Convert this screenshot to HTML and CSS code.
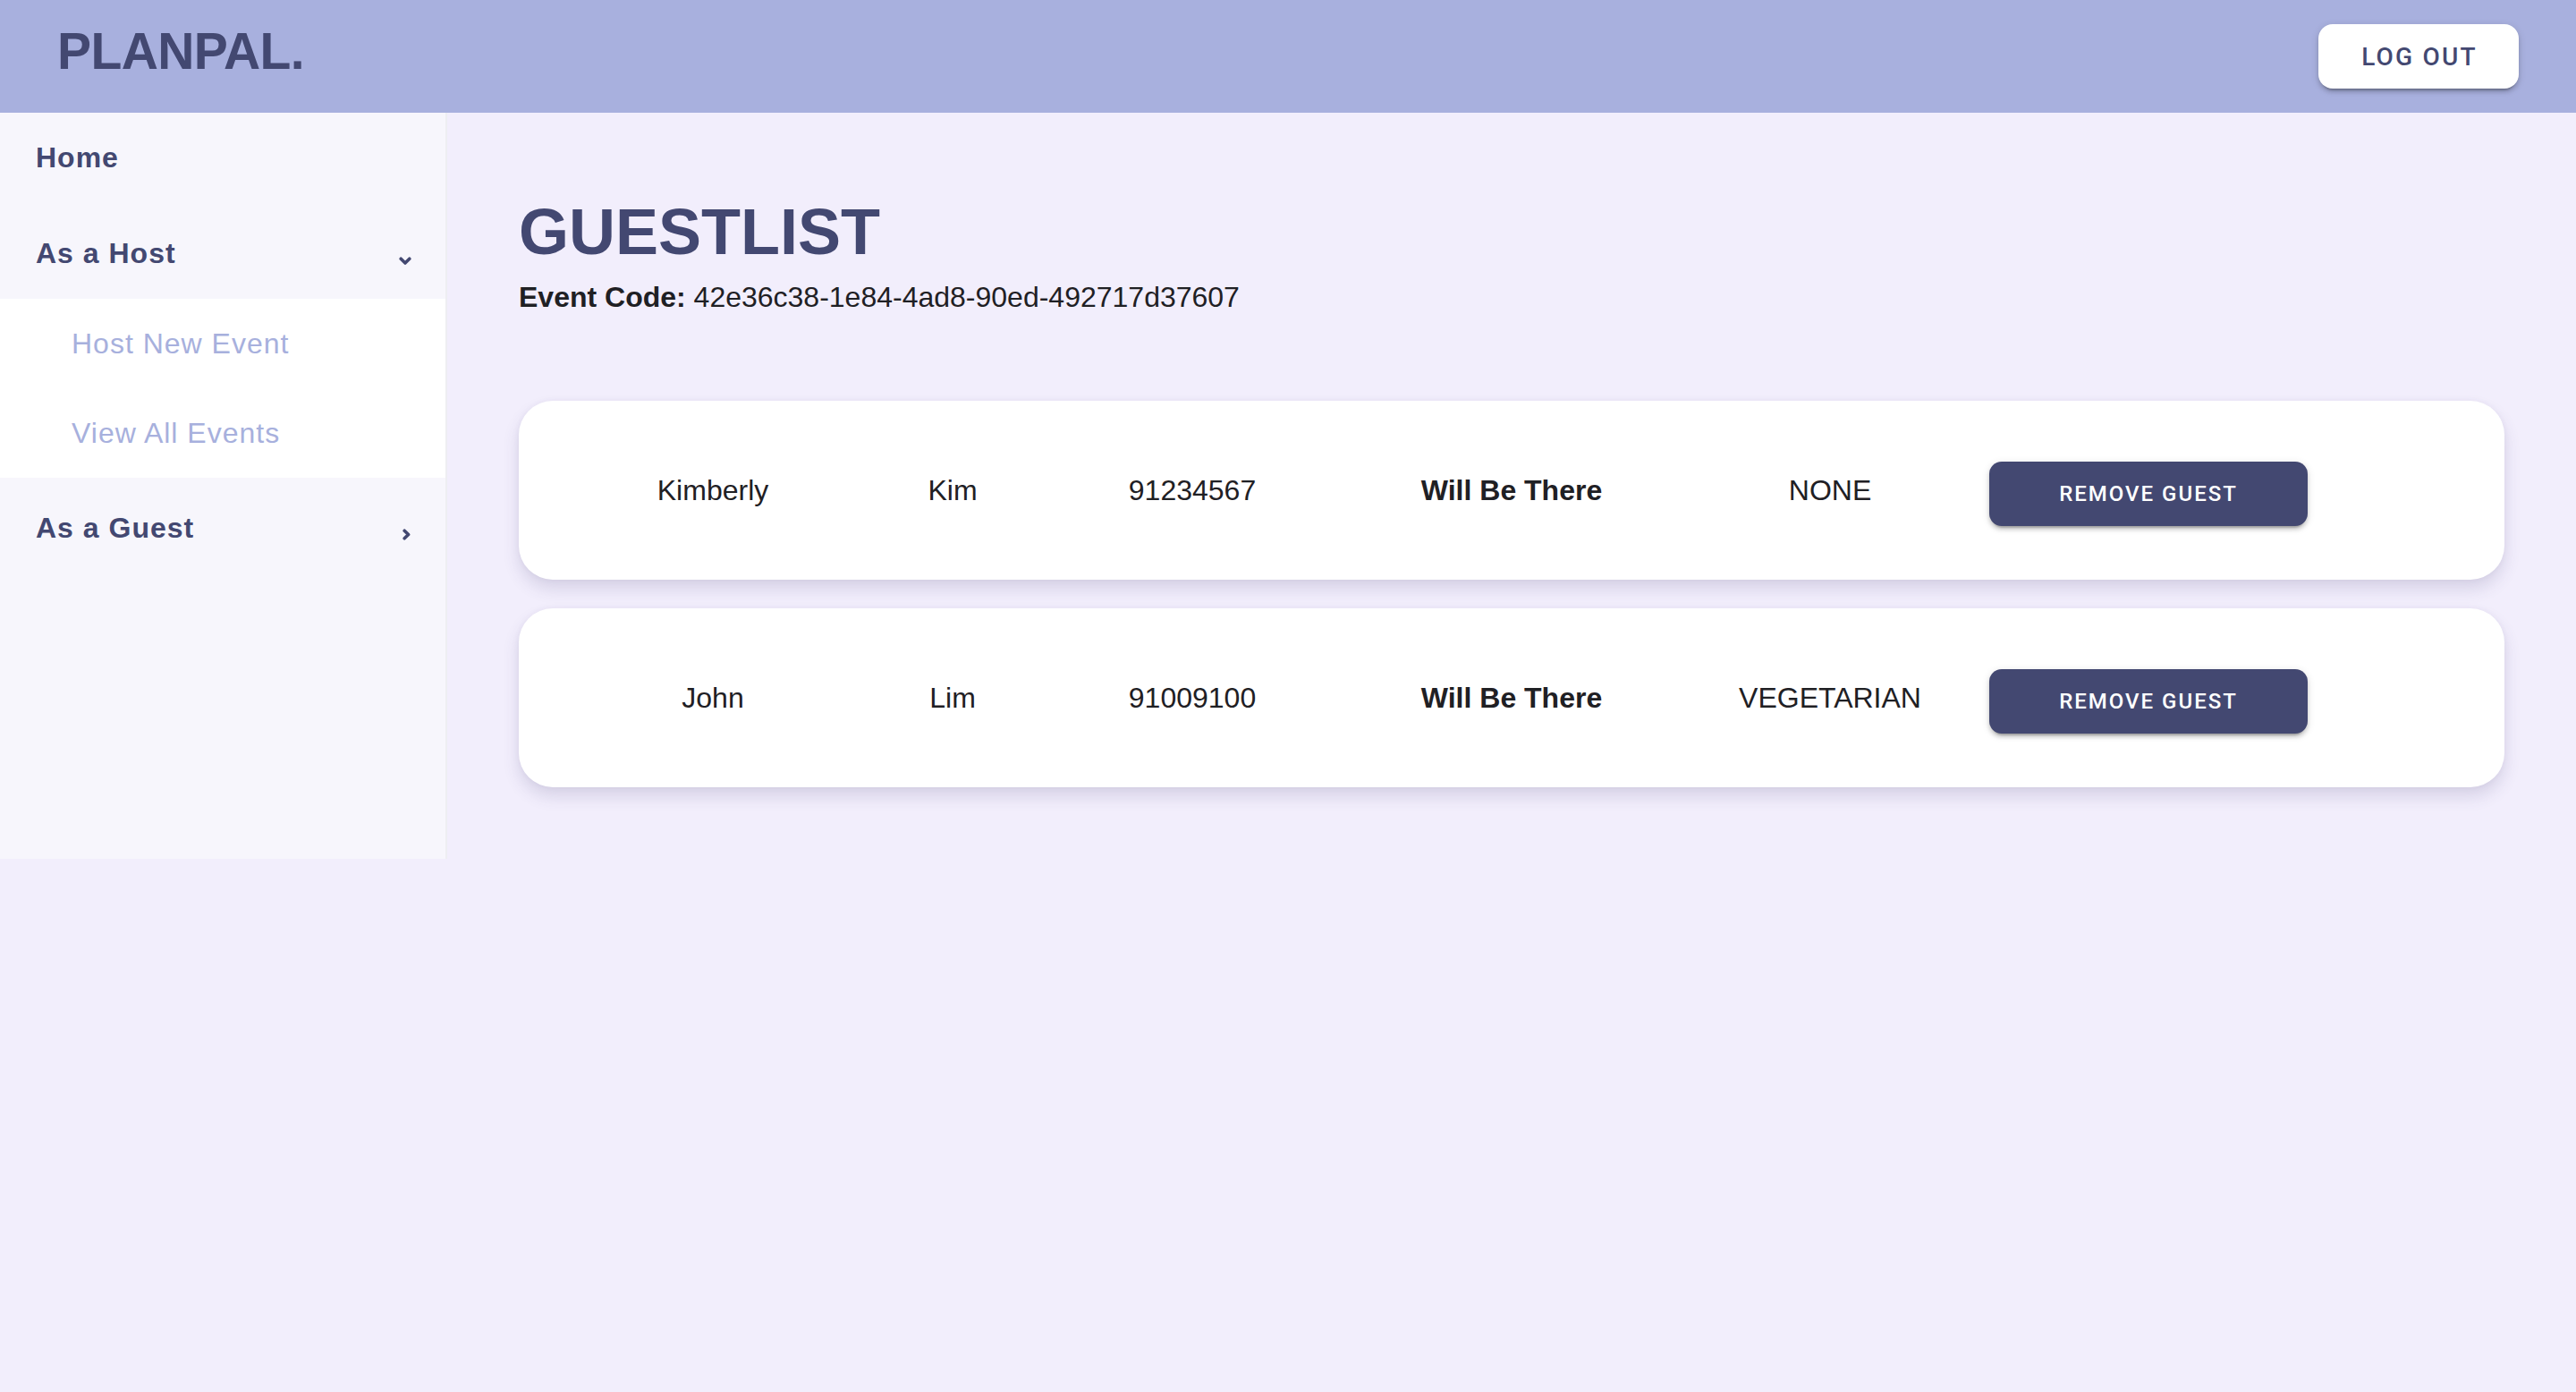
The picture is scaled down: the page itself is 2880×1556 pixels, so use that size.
FILE: index.html
```html
<!DOCTYPE html>
<html lang="en">
<head>
<meta charset="utf-8">
<title>PlanPal - Guestlist</title>
<link rel="stylesheet" href="styles.css">
</head>
<body>
<header class="topbar">
  <div class="logo">PLANPAL.</div>
  <button class="logout">LOG OUT</button>
</header>
<div class="layout">
  <aside class="sidebar">
    <div class="nav-row nav-home">Home</div>
    <div class="nav-row nav-host">
      <span>As a Host</span>
      <svg class="chev chev-down" width="14" height="10" viewBox="0 0 14 10"><polyline points="2.2,2.2 7,7 11.8,2.2" fill="none" stroke="#434871" stroke-width="3.6" stroke-linecap="round" stroke-linejoin="round"/></svg>
    </div>
    <div class="submenu">
      <div class="sub-row">Host New Event</div>
      <div class="sub-row">View All Events</div>
    </div>
    <div class="nav-row nav-guest">
      <span>As a Guest</span>
      <svg class="chev chev-right" width="9" height="13" viewBox="0 0 9 13"><polyline points="2.2,2.2 6.6,6.5 2.2,10.8" fill="none" stroke="#434871" stroke-width="3.6" stroke-linecap="round" stroke-linejoin="round"/></svg>
    </div>
  </aside>
  <main class="content">
    <h1 class="title">GUESTLIST</h1>
    <p class="code"><strong>Event Code:</strong> 42e36c38-1e84-4ad8-90ed-492717d37607</p>
    <div class="cards">
      <div class="card">
        <div class="cell">Kimberly</div>
        <div class="cell">Kim</div>
        <div class="cell">91234567</div>
        <div class="cell wide status">Will Be There</div>
        <div class="cell wide">NONE</div>
        <div class="cell wide"><button class="remove">REMOVE GUEST</button></div>
      </div>
      <div class="card">
        <div class="cell">John</div>
        <div class="cell">Lim</div>
        <div class="cell">91009100</div>
        <div class="cell wide status">Will Be There</div>
        <div class="cell wide">VEGETARIAN</div>
        <div class="cell wide"><button class="remove">REMOVE GUEST</button></div>
      </div>
    </div>
  </main>
</div>
</body>
</html>
```
FILE: styles.css
```css
* { box-sizing: border-box; }
html, body { margin: 0; padding: 0; }
body {
  background: #f2eefc;
  font-family: "Liberation Sans", Arial, Helvetica, sans-serif;
  color: #1f2024;
  min-height: 1556px;
}
.topbar {
  height: 126px;
  background: #a8b0de;
  display: flex;
  align-items: center;
  justify-content: space-between;
  padding: 0 64px 0 64px;
}
.logo {
  font-size: 57px;
  line-height: 57px;
  font-weight: 700;
  letter-spacing: -0.6px;
  color: #434871;
  margin-bottom: 12px;
}
.logout {
  width: 224px;
  height: 72px;
  border: none;
  border-radius: 16px;
  background: #ffffff;
  color: #434871;
  font-family: Roboto, "Liberation Sans", sans-serif;
  font-weight: 500;
  font-size: 28px;
  letter-spacing: 2.2px;
  padding: 0 0 0 2px;
  box-shadow: 0 6px 2px -4px rgba(0,0,0,0.2), 0 4px 4px 0 rgba(0,0,0,0.14), 0 2px 10px 0 rgba(0,0,0,0.12);
}
.layout {
  display: flex;
  align-items: flex-start;
}
.sidebar {
  width: 500px;
  height: 834px;
  flex-shrink: 0;
  background: #f7f6fc;
  border-right: 2px solid #eeeef2;
}
.nav-row {
  display: flex;
  align-items: center;
  justify-content: space-between;
  padding: 0 38px 0 40px;
  font-size: 32px;
  font-weight: 700;
  letter-spacing: 1px;
  color: #434871;
}
.nav-home { height: 99px; padding-top: 2px; }
.nav-host { height: 109px; padding-top: 7px; }
.nav-guest { height: 113px; }
.chev-down { margin-top: 18px; }
.chev-right { margin-top: 13px; margin-right: 1px; }
.submenu {
  background: #ffffff;
}
.sub-row {
  height: 100px;
  display: flex;
  align-items: center;
  padding-left: 80px;
  font-size: 32px;
  letter-spacing: 1px;
  color: #a7b0dd;
}
.content {
  flex: 1;
  padding: 97px 80px 0 80px;
}
.title {
  margin: 0;
  font-size: 72px;
  line-height: 72px;
  font-weight: 700;
  color: #434871;
}
.code {
  margin: 18px 0 0 0;
  font-size: 32px;
  line-height: 38px;
  color: #1f2024;
}
.code strong { font-weight: 700; }
.cards {
  margin-top: 97px;
  display: flex;
  flex-direction: column;
  gap: 32px;
}
.card {
  height: 200px;
  background: #ffffff;
  border-radius: 38px;
  display: flex;
  align-items: center;
  padding-left: 83px;
  box-shadow: 0 10px 18px rgba(70, 60, 120, 0.16), 0 0 6px rgba(70, 60, 120, 0.05);
}
.cell {
  width: 268px;
  text-align: center;
  font-size: 32px;
  color: #1f2024;
}
.cell.wide { width: 356px; }
.status {
  margin-left: 45px;
  font-weight: 700;
}
.remove {
  width: 356px;
  height: 72px;
  margin-top: 8px;
  border: none;
  border-radius: 14px;
  background: #434871;
  color: #ffffff;
  font-family: Roboto, "Liberation Sans", sans-serif;
  font-weight: 500;
  font-size: 24px;
  letter-spacing: 2px;
  box-shadow: 0 6px 2px -4px rgba(0,0,0,0.2), 0 4px 4px 0 rgba(0,0,0,0.14), 0 2px 10px 0 rgba(0,0,0,0.12);
}
```
